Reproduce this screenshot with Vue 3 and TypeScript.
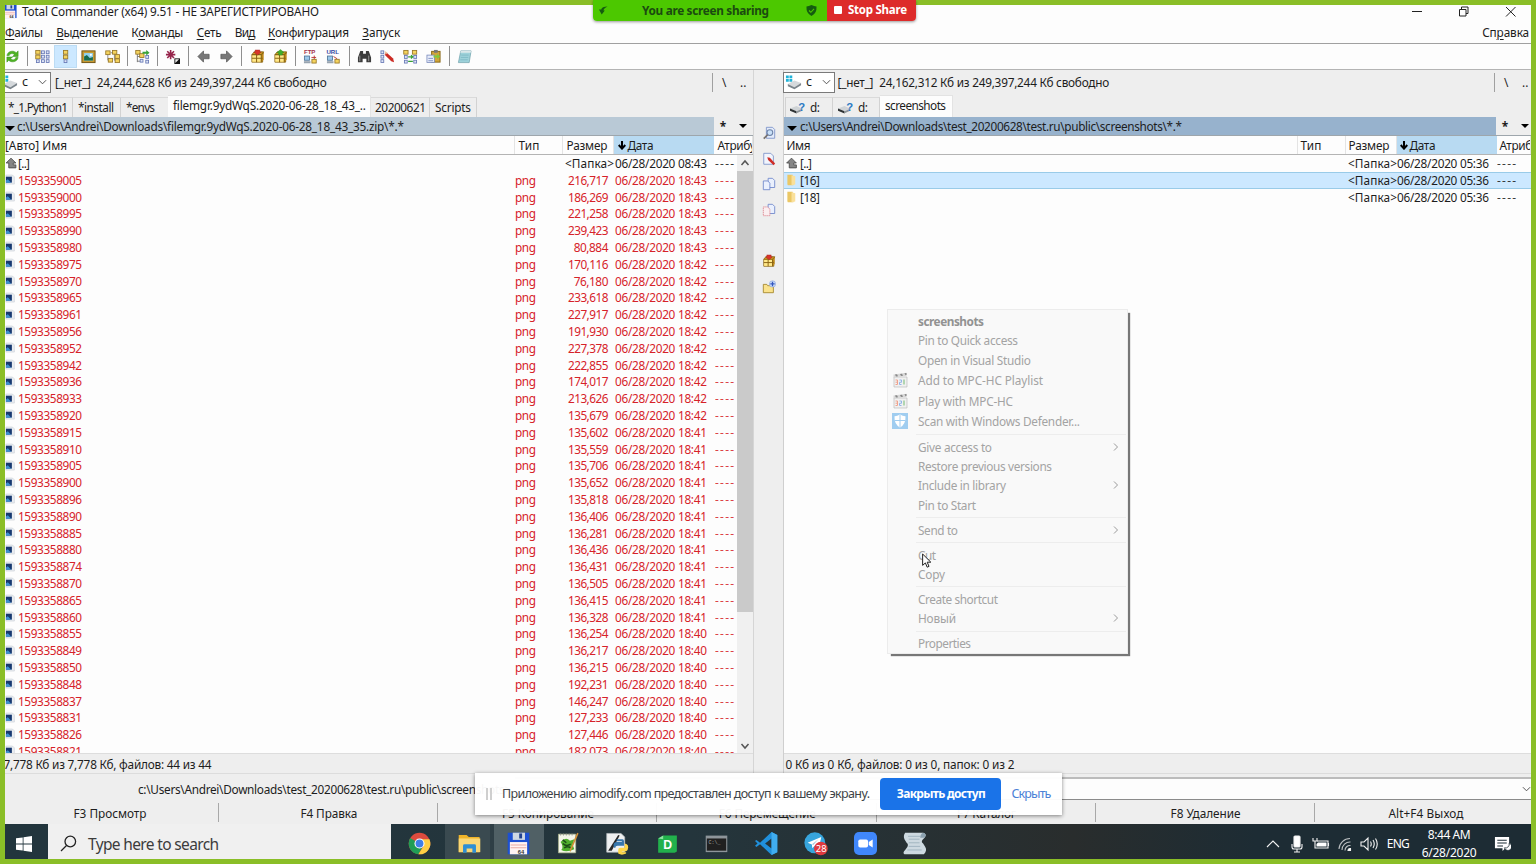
<script setup lang="ts">
import type { Directive } from 'vue'

interface Row {
  icon: string
  name: string
  ext: string
  size: string
  date: string
  dir: boolean
  selected?: boolean
}

interface MenuEntry {
  label: string
  w: number
  bold?: boolean
  icon?: string
  sub?: boolean
}

// Tracks the text so that a label occupies the given width in pixels.
const vFit: Directive<HTMLElement, number> = {
  mounted(el, binding) {
    const count = (el.textContent ?? '').length
    if (count < 2) return
    const natural = el.getBoundingClientRect().width
    el.style.letterSpacing = `${((binding.value - natural) / (count - 1)).toFixed(3)}px`
  },
}

const menus = [
  { a: '', u: 'Ф', b: 'айлы', w: 38 },
  { a: '', u: 'В', b: 'ыделение', w: 62 },
  { a: 'К', u: 'о', b: 'манды', w: 52 },
  { a: '', u: 'С', b: 'еть', w: 25 },
  { a: 'Ви', u: 'д', b: '', w: 20.500 },
  { a: '', u: 'К', b: 'онфигурация', w: 81 },
  { a: '', u: 'З', b: 'апуск', w: 38 },
]

const toolbar = [
  'refresh', '|', 'brief', 'full', 'thumbs', 'tree', '|', 'branch', '|', 'invert', '|',
  'back', 'forward', '|', 'pack', 'unpack', '|', 'ftp', 'url', '|',
  'find', 'rename', 'sync', 'copynames', '|', 'notepad',
]

const sideTools = ['view', 'edit', 'copy', 'move', '', 'pack', 'newfolder']

const raw: [string, string][] = [
  ['9005', '216,717'], ['9000', '186,269'], ['8995', '221,258'], ['8990', '239,423'],
  ['8980', '80,884'], ['8975', '170,116'], ['8970', '76,180'], ['8965', '233,618'],
  ['8961', '227,917'], ['8956', '191,930'], ['8952', '227,378'], ['8942', '222,855'],
  ['8936', '174,017'], ['8933', '213,626'], ['8920', '135,679'], ['8915', '135,602'],
  ['8910', '135,559'], ['8905', '135,706'], ['8900', '135,652'], ['8896', '135,818'],
  ['8890', '136,406'], ['8885', '136,281'], ['8880', '136,436'], ['8874', '136,431'],
  ['8870', '136,505'], ['8865', '136,415'], ['8860', '136,328'], ['8855', '136,254'],
  ['8849', '136,217'], ['8850', '136,215'], ['8848', '192,231'], ['8837', '146,247'],
  ['8831', '127,233'], ['8826', '127,446'], ['8821', '182,073'],
]

const minuteOf = (i: number): string => (i < 5 ? '43' : i < 15 ? '42' : i < 27 ? '41' : '40')

const folder = (icon: string, name: string, date: string, selected = false): Row => ({
  icon, name, ext: '', size: '<Папка>', date, dir: true, selected,
})

const leftRows: Row[] = [
  folder('up', '[..]', '06/28/2020 08:43'),
  ...raw.map(([id, size], i) => ({
    icon: 'image', name: '159335' + id, ext: 'png', size, date: `06/28/2020 18:${minuteOf(i)}`, dir: false,
  })),
]

const rightRows: Row[] = [
  folder('up', '[..]', '06/28/2020 05:36'),
  folder('folder', '[16]', '06/28/2020 05:36', true),
  folder('folder', '[18]', '06/28/2020 05:36'),
]

const panels = [
  {
    key: 'left', free: '24,244,628 Кб из 249,397,244 Кб свободно', path: 'c:\\Users\\Andrei\\Downloads\\filemgr.9ydWqS.2020-06-28_18_43_35.zip\\*.*',
    pathW: 387, first: '[Авто] Имя', firstW: 62, attr: 'Атрибуты', attrW: 52, rows: leftRows,
    status: '7,778 Кб из 7,778 Кб, файлов: 44 из 44', statusW: 208,
    tabs: [
      { t: '*_1.Python1', w: 60, c: 't1' }, { t: '*install', w: 36, c: 't2' }, { t: '*envs', w: 29, c: 't3' },
      { t: 'filemgr.9ydWqS.2020-06-28_18_43_..', w: 193, c: 't4 active' },
      { t: '20200621', w: 51, c: 't5' }, { t: 'Scripts', w: 36, c: 't6' },
    ],
  },
  {
    key: 'right', free: '24,162,312 Кб из 249,397,244 Кб свободно', path: 'c:\\Users\\Andrei\\Downloads\\test_20200628\\test.ru\\public\\screenshots\\*.*',
    pathW: 382, first: 'Имя', firstW: 24, attr: 'Атрибуты', attrW: 52, rows: rightRows,
    status: '0 Кб из 0 Кб, файлов: 0 из 0, папок: 0 из 2', statusW: 229,
    tabs: [
      { t: 'd:', w: 10, c: 'd1', icon: 'drive' }, { t: 'd:', w: 10, c: 'd2', icon: 'drive' },
      { t: 'screenshots', w: 61, c: 'd3 active' },
    ],
  },
]

const fkeys = [
  { t: 'F3 Просмотр', w: 73 }, { t: 'F4 Правка', w: 57 }, { t: 'F5 Копирование', w: 92 },
  { t: 'F6 Перемещение', w: 97 }, { t: 'F7 Каталог', w: 59 }, { t: 'F8 Удаление', w: 70 },
  { t: 'Alt+F4 Выход', w: 75 },
]

const groups: MenuEntry[][] = [
  [
    { label: 'screenshots', w: 66, bold: true },
    { label: 'Pin to Quick access', w: 100 },
    { label: 'Open in Visual Studio', w: 113 },
    { label: 'Add to MPC-HC Playlist', w: 125, icon: 'mpc' },
    { label: 'Play with MPC-HC', w: 95, icon: 'mpc' },
    { label: 'Scan with Windows Defender...', w: 162, icon: 'defender' },
  ],
  [
    { label: 'Give access to', w: 74, sub: true },
    { label: 'Restore previous versions', w: 134 },
    { label: 'Include in library', w: 88, sub: true },
    { label: 'Pin to Start', w: 58 },
  ],
  [{ label: 'Send to', w: 40, sub: true }],
  [{ label: 'Cut', w: 18 }, { label: 'Copy', w: 27 }],
  [{ label: 'Create shortcut', w: 80 }, { label: 'Новый', w: 38, sub: true }],
  [{ label: 'Properties', w: 53 }],
]

const apps = ['chrome', 'explorer', 'floppy', 'npp', 'python', 'dict', 'cmd', 'vscode', 'telegram', 'zoom', 'script']

const node = (x: number, y: number, c: string): string =>
  `<rect x="${x}" y="${y}" width="3" height="3" fill="#dfe5f6" stroke="${c}" stroke-width=".9"/>`
const dots = (x: number, c = '#6577b4'): string => node(x, 2, c) + node(x, 6.7, c) + node(x, 11.4, c)
const yfold = (x: number, y: number): string =>
  `<rect x="${x}" y="${y}" width="4.6" height="4" fill="#f4d35e" stroke="#967526" stroke-width=".9"/>`
const box = '<path d="M2 6l2.500-3h10l-1 3v8H2z" fill="#d9a520" stroke="#7b5a10" stroke-width=".8"/><path d="M2.400 6.400h9.300v7.200H2.400z" fill="#ffe88a"/><path d="M14.500 3.500v8L12 14V6.200z" fill="#c08a17"/><path d="M2 9.800h11.500M7 6v8M2 6h10l2.300-2.500M12 6v8" stroke="#8a6514" stroke-width="1.100" fill="none"/>'

const icons: Record<string, string> = {
  refresh: '<path d="M2 7c1-5 7-6 10-3l2-2v6H8l2-2C8 4 5 5 4.500 7zM14 9c-1 5-7 6-10 3l-2 2V8.500h6l-2 2c2 2 5 1 5.500-1.500z" fill="#4fb324" stroke="#2d8a12" stroke-width=".5"/>',
  brief: yfold(.8, 1.500) + yfold(.8, 6.500) + node(1.500, 11.500, '#6577b4') + dots(7) + dots(12),
  full: yfold(5.800, 1.500) + yfold(5.800, 6.500) + node(6.500, 11.500, '#6577b4'),
  thumbs: '<rect x="1" y="2" width="14" height="12.500" fill="#c79a33" stroke="#6f5110"/><rect x="3.300" y="4.300" width="9.400" height="8" fill="#8fd0ee"/><path d="M3.300 12.300V8l3-1.500 3 3 3.400-1v3.800z" fill="#176a4d"/><circle cx="10.500" cy="6.200" r="1.200" fill="#fff"/>',
  tree: '<path d="M3 4v8h2M10 3v9h2M6 4h5" stroke="#8b8b8b" fill="none"/>' + yfold(.8, 2) + yfold(3.500, 10) + yfold(8, 1.500) + yfold(10.800, 10.500) + yfold(10.800, 6),
  branch: '<path d="M2.500 3v11M2.500 8h3M2.500 13h3" stroke="#777" fill="none"/>' + yfold(.8, 1.500) + yfold(5, 5) + node(5.500, 11, '#6577b4') + node(11.500, 7, '#6577b4') + node(11.500, 12, '#6577b4') + '<path d="M8 3h4V1l3.500 3-3.500 3V5H8z" fill="#3aa33a"/>',
  invert: '<path d="M6 1v10M1 6h10M2.400 2.400l7.200 7.200M9.600 2.400L2.400 9.600" stroke="#96234a" stroke-width="1.700"/><path d="M10 10h6v6h-6z" fill="#111"/><path d="M11 11h4l-4 4z" fill="#eee"/>',
  back: '<path d="M2 8l6-6v3.600h6v4.800H8V14z" fill="#787878" stroke="#505050" stroke-width=".7"/>',
  forward: '<path d="M14 8L8 2v3.600H2v4.800h6V14z" fill="#787878" stroke="#505050" stroke-width=".7"/>',
  pack: box + '<path d="M5.500 1h5v2.300h1.500L8 6.500 4 3.300h1.500z" fill="#d8352c" stroke="#9d1c18" stroke-width=".4"/>',
  unpack: box + '<path d="M8 .5l4 3.500h-2v2.500H6V4H4z" fill="#3fae2e" stroke="#277e1c" stroke-width=".4"/>',
  ftp: '<text x="1" y="5.800" font-size="6.500" font-weight="700" font-family="Liberation Sans" fill="#a33249">FTP</text><rect x="1.500" y="7.500" width="5.500" height="4.500" fill="#9cc8ea" stroke="#4f7497" stroke-width=".9"/><rect x="1" y="13" width="7" height="2.200" fill="#98a4b0"/><path d="M9 9h5M12 7v4" stroke="#b33" />' + yfold(9.500, 11),
  url: '<text x=".5" y="5.800" font-size="6.500" font-weight="700" font-family="Liberation Sans" fill="#3448a0">URL</text><rect x="1.500" y="7.500" width="5.500" height="4.500" fill="#9cc8ea" stroke="#4f7497" stroke-width=".9"/><rect x="1" y="13" width="7" height="2.200" fill="#98a4b0"/><path d="M8 8l4 2.500" stroke="#b33" />' + yfold(9.500, 11),
  find: '<path d="M3.500 2h3v3h3V2h3L15 9v5h-5v-3.500H6V14H1V9z" fill="#3c3c3c"/><path d="M3 7v6M12.500 7v6" stroke="#999"/>',
  rename: dots(1) + '<path d="M6 3l8 7 1 4-3-1-7-7z" fill="#cc2b24"/><path d="M5 2l3 2-2 2z" fill="#efc9a3"/>',
  sync: yfold(.8, 1.500) + yfold(10, 1.500) + node(1.500, 7, '#6577b4') + node(1.500, 12, '#6577b4') + node(11.500, 7, '#6577b4') + node(11.500, 12, '#6577b4') + '<path d="M5.500 8.300h5M8.500 6.500l2 1.800-2 1.800M10.500 13.300h-5" stroke="#35a035" fill="none" stroke-width="1.300"/>',
  copynames: '<rect x="6" y="2.500" width="9" height="11.500" fill="#d1a53a" stroke="#856516"/><rect x="8.500" y="1" width="4" height="3" fill="#777"/><rect x="1" y="6.500" width="8" height="8" fill="#e8edfa" stroke="#7284b8" stroke-width=".8"/><path d="M2.500 10h5M2.500 12.500h5" stroke="#8092c4"/><path d="M8 7h4v-2l3 3-3 3V9H8z" fill="#7ecb3c"/>',
  notepad: '<path d="M4 2h11l-2 12.500H1.500z" fill="#9ed2da" stroke="#669ba6" stroke-width=".7"/><path d="M4 2h11l-.4 2H3.500z" fill="#dce8ea"/><path d="M4.500 6.500h8M4 9h8M3.500 11.500h8" stroke="#79b6c1" stroke-width=".8"/>',
  view: '<path d="M5 1.500h7l2.500 2.500v10H5z" fill="#e3ebfa" stroke="#7e93c9"/><circle cx="9" cy="7.500" r="3.300" fill="#c9e0f8" stroke="#6d83a8" stroke-width="1.200"/><path d="M6.500 10L2 14.500" stroke="#77716c" stroke-width="2"/>',
  edit: '<path d="M2 1.500h8l3 3v9.500H2z" fill="#f2f5fd" stroke="#7e93c9"/><path d="M6 6l3 .7 6 6.300-1.700 2-6.300-6z" fill="#cf2d27"/>',
  copy: '<path d="M7 1.500h5l2.500 2.500v8H7z" fill="#eaf0fd" stroke="#7088cb"/><path d="M1.500 4.500h5L9 7v7.500H1.500z" fill="#eaf0fd" stroke="#7088cb"/>',
  move: '<path d="M7 1.500h5l2.500 2.500v8H7z" fill="#eaf0fd" stroke="#7088cb"/><path d="M1.500 4.500h5L9 7v7.500H1.500z" fill="#fbeef0" stroke="#dd8790" stroke-dasharray="1.500 .7"/>',
  newfolder: '<path d="M1.500 5h4l1 1.500H13v8H1.500z" fill="#fae28c" stroke="#a3862c"/><circle cx="12" cy="4.500" r="3.600" fill="#cfe0fb" stroke="#7b97d8" stroke-width=".6"/><path d="M12 2v5M9.500 4.500h5" stroke="#3356bd" stroke-width="1.500"/>',
  up: '<path d="M8 1.500L14.500 8H11v2.500h3.500v4H5V8H1.500z" fill="#858585" stroke="#484848" stroke-width="1.100"/>',
  image: '<path d="M1.500 .8h10.500l3 3v11.500H1.500z" fill="#e9edf1" stroke="#b9c2ca" stroke-width=".7"/><path d="M1.500 3.500H11v9.500H1.500z" fill="#17386f"/><path d="M1.500 13V9.500l3-2L10 13z" fill="#3d8fd1"/>',
  folder: '<path d="M2.500 1h7l1 12v2H3l-.5-1.500z" fill="#ebc765"/><path d="M8 1.500l5 1.500v11L8 15z" fill="#fae09a"/>',
  disk: '<path d="M1 1.500h3v3H1zM4.700 1.500h3v3h-3zM1 5.200h3v3H1zM4.700 5.200h3v3h-3z" fill="#1fb2d8"/><path d="M3 10.500l7-3.500 7 2.500-7 4.500z" fill="#d5d9dc"/><path d="M3 10.500l7 3.500v2.200l-7-3.200zM10 14l7-4.500v2.300l-7 4.400z" fill="#7b858c"/>',
  drive: '<path d="M0 10l7-2.500 6 3-6 2.500z" fill="#cfd3d6"/><path d="M0 10l7 3v2.400l-7-3z" fill="#2e3234"/><path d="M7 13l6-2.500v2L7 15.200z" fill="#8d9499"/><text x="8.800" y="12.500" font-size="12" font-weight="700" font-family="Liberation Sans" fill="#2b79c4">?</text>',
  floppy: '<path d="M1 1h30v30H1z" fill="#1d50d2"/><path d="M8 1h17v10H8z" fill="#cfd8e4"/><path d="M17 2h4v7h-4z" fill="#20418e"/><path d="M4 14h24v17H4z" fill="#fff3f2"/><path d="M5 18h22M5 22h22" stroke="#e9aaa4" stroke-width="1.500"/><text x="15" y="30" font-size="8" font-weight="700" font-family="Liberation Sans" fill="#333">64</text>',
  chrome: '<circle cx="16" cy="16" r="15" fill="#dd4b3e"/><path d="M16 16L3 8.500A15 15 0 0 0 14.500 31l6-10.500z" fill="#209d56"/><path d="M14.500 31A15 15 0 0 0 29.800 10H16l6 9z" fill="#fdce44"/><circle cx="16" cy="16" r="7" fill="#fff"/><circle cx="16" cy="16" r="5.500" fill="#3f7fe8"/>',
  explorer: '<path d="M1 4h11l3 3h15v21H1z" fill="#f0b429"/><path d="M1 9h30v19H1z" fill="#fbd775"/><path d="M7 29V19q0-2 2-2h14q2 0 2 2v10h-5v-6h-8v6z" fill="#2f8fd4"/>',
  npp: '<path d="M2 3h24v26H2z" fill="#f4f6e9" stroke="#aab28b"/><path d="M5 2v3M9 2v3M13 2v3M17 2v3M21 2v3" stroke="#888"/><path d="M5 14q7-8 13-2l6-2-2 8 2 6q-11 5-18 1 4-4-1-11z" fill="#4fae2c"/><path d="M8 16q5 5 11 1M10 22q5-3 9 0M8 11l5 4" stroke="#1b4b16" fill="none" stroke-width="2"/><path d="M30 2L20 25l-2 3V24L28 1z" fill="#d3913a"/>',
  python: '<path d="M1 2h20l5 5v21H1z" fill="#eef0f1" stroke="#b6bcc0"/><path d="M3 26L17 4l2 1L8 26z" fill="#272727"/><path d="M15 10h8q2 0 2 3v6h-9q-3 0-3 3h-2q-2-7 3-8h8v-1h-7z" fill="#3776ab"/><path d="M26 16q7 1 4 9-1 2-4 2h-4v1h6v2q-6 3-11 0v-5q0-3 3-3h6z" fill="#ffd648"/>',
  dict: '<path d="M3 9l7-4h19v22l-3 2H3z" fill="#22b14c"/><path d="M3 9l7-4v5z" fill="#8be3a0"/><text x="10" y="24" font-size="17" font-weight="700" font-family="Liberation Sans" fill="#fff">D</text>',
  cmd: '<path d="M1 5h30v23H1z" fill="#8e959a"/><path d="M2.500 9h27v17h-27z" fill="#202020"/><text x="5" y="16" font-size="7" font-family="Liberation Mono" fill="#aaa">C:\\_</text>',
  vscode: '<path d="M23 0l8 4v24l-8 4L7 17 2 21l-2-2 3.500-3L0 12.500 2 11l5 4zM23 9l-9 7 9 7z" fill="#2090dc" fill-rule="evenodd"/><path d="M23 0l8 4v24l-8 4z" fill="#40adf0"/>',
  telegram: '<circle cx="15" cy="15" r="14.500" fill="#37a5dd"/><path d="M5 15L24 7l-3.500 17-6-4.500-3 3-.5-5z" fill="#fff"/><path d="M11 17l9-7-7 8z" fill="#a9c9dd"/><circle cx="23.500" cy="23" r="9.500" fill="#e0393e"/><text x="16.500" y="28" font-size="13" font-family="Noto Sans" fill="#fff">28</text>',
  zoom: '<rect x="0" y="0" width="32" height="32" rx="7" fill="#4087fc"/><rect x="6" y="10.500" width="13.500" height="11" rx="2.500" fill="#fff"/><path d="M20.500 14l5.500-3.500v11L20.500 18z" fill="#fff"/>',
  script: '<path d="M3 1h25q6 2 2 7l-3 3q-2 3 1 5l3 5q3 5-2 10H2q-3-2 1-6l3-4q2-4-1-6L2 10q-2-5 1-9z" fill="#cdd9e0"/><path d="M7 6h17M8 10h15M8 15h15M8 20h16M6 25h20" stroke="#9fb3bf" stroke-width="1.300"/><path d="M28 1q6 2 2 7h-6q0-5 4-7z" fill="#8ba1af"/>',
  mpc: '<path d="M2 5h13v10H2z" fill="#f1f1f1" stroke="#bbb" stroke-width=".7"/><path d="M1.500 2.500L14.500.8v3L1.500 5.500z" fill="#d8d8d8"/><path d="M3 2.500l2-.3 1 2-2 .3zM8 2l2-.3 1 2-2 .3zM12.500 1.200l2-.2v2l-1 .2z" fill="#888"/><path d="M3.500 8h2v4.500h-2m0-2.300h2" stroke="#f0a28d" fill="none"/><path d="M7.500 8h2v2.300h-2v2.200h2" stroke="#92b4e8" fill="none"/><path d="M12 7.500v5" stroke="#87c487" stroke-width="1.200"/>',
  defender: '<path d="M0 0h16v16H0z" fill="#a0cdf0"/><path d="M8 1.500q3 1.800 5.500 1.700Q14 11 8 14.500 2 11 2.500 3.200 5 3.300 8 1.500z" fill="#fff"/><path d="M8 2v12M2.500 7.500h11" stroke="#a0cdf0"/>',
}
</script>

<template>
  <div class="screen">
    <div class="window">
      <header class="title">
        <svg class="i16" viewBox="0 0 32 32" v-html="icons.floppy" />
        <span v-fit="297">Total Commander (x64) 9.51 - НЕ ЗАРЕГИСТРИРОВАНО</span>
        <svg class="winbtns" viewBox="0 0 110 14" fill="none" stroke="#222">
          <path d="M1 7.500h10" /><path d="M48.500 5.500h6.500v6.500h-6.500zM50.500 5.500v-2.500h6.500v6.500h-2" /><path d="M95 3l9.500 9.500M104.500 3L95 12.500" />
        </svg>
      </header>
      <nav class="menubar">
        <span v-for="m in menus" :key="m.u + m.b" v-fit="m.w">{{ m.a }}<u>{{ m.u }}</u>{{ m.b }}</span>
        <span v-fit="47" class="help">Сп<u>р</u>авка</span>
      </nav>
      <div class="toolbar">
        <template v-for="(t, i) in toolbar" :key="i">
          <i v-if="t === '|'" class="tsep" />
          <b v-else class="tbtn" :class="{ on: t === 'full' }"><svg class="i16" viewBox="0 0 16 16" v-html="icons[t]" /></b>
        </template>
      </div>

      <main class="work">
        <section v-for="p in panels" :key="p.key" class="panel" :class="p.key">
          <div class="drive">
            <div class="combo">
              <svg class="i17" viewBox="0 0 18 18" v-html="icons.disk" /><span>c</span>
              <svg class="chev" viewBox="0 0 10 6"><path d="M1 1l4 4 4-4" fill="none" stroke="#444" /></svg>
            </div>
            <span v-fit="36" class="label">[_нет_]</span>
            <span v-fit="230" class="free">{{ p.free }}</span>
            <div class="nav"><span>\</span><span>..</span></div>
          </div>
          <div class="tabs">
            <div v-for="t in p.tabs" :key="t.c" class="tab" :class="t.c">
              <svg v-if="'icon' in t" class="i16" viewBox="0 0 16 16" v-html="icons.drive" />
              <span v-fit="t.w">{{ t.t }}</span>
            </div>
          </div>
          <div class="path">
            <div class="crumb"><i class="tri" /><span v-fit="p.pathW">{{ p.path }}</span></div>
            <span class="star">*</span><i class="tri small" />
          </div>
          <div class="head cols">
            <div><span v-fit="p.firstW">{{ p.first }}</span></div>
            <div><span v-fit="21">Тип</span></div>
            <div><span v-fit="41">Размер</span></div>
            <div class="sorted">
              <svg class="arrow" viewBox="0 0 9 10"><path d="M4.500 0v8M.8 4.500l3.700 4 3.700-4" fill="none" stroke="#000" stroke-width="2.300" /></svg>
              <span v-fit="26">Дата</span>
            </div>
            <div><span v-fit="p.attrW">{{ p.attr }}</span></div>
          </div>
          <div class="body">
            <div class="list">
              <div v-for="r in p.rows" :key="r.name" class="row cols" :class="{ file: !r.dir, sel: r.selected }">
                <div class="name"><svg viewBox="0 0 16 16" v-html="icons[r.icon]" /><span v-fit="r.dir ? (r.name === '[..]' ? 12 : 20) : 64">{{ r.name }}</span></div>
                <div><span v-if="r.ext" v-fit="21">{{ r.ext }}</span></div>
                <div class="size"><span v-fit="r.dir ? 49 : r.size.length * 5.8">{{ r.size }}</span></div>
                <div class="date"><span v-fit="92">{{ r.date }}</span></div>
                <div><span v-fit="19">----</span></div>
              </div>
            </div>
            <div v-if="p.key === 'left'" class="scroll">
              <svg viewBox="0 0 16 16"><path d="M4.500 10L8 6l3.500 4" /></svg>
              <div class="thumb" />
              <svg class="down" viewBox="0 0 16 16"><path d="M4.500 6L8 10l3.500-4" /></svg>
            </div>
          </div>
          <div class="status"><span v-fit="p.statusW">{{ p.status }}</span></div>
        </section>
        <aside class="side">
          <b v-for="(s, i) in sideTools" :key="i"><svg v-if="s" viewBox="0 0 16 16" v-html="icons[s]" /></b>
        </aside>
      </main>

      <div class="command">
        <span v-fit="373">c:\Users\Andrei\Downloads\test_20200628\test.ru\public\screenshots&gt;</span>
        <div class="input"><svg class="chev" viewBox="0 0 10 6"><path d="M1 1l4 4 4-4" fill="none" stroke="#444" /></svg></div>
      </div>
      <div class="fkeys"><div v-for="f in fkeys" :key="f.t"><span v-fit="f.w">{{ f.t }}</span></div></div>

      <footer class="taskbar">
        <div class="start"><svg viewBox="0 0 16 16"><path d="M0 2.300l6.700-.9v6.100H0zM7.500 1.300L16 0v7.500H7.500zM0 8.400h6.700v6.200L0 13.700zM7.500 8.400H16V16l-8.500-1.300z" fill="#fff" /></svg></div>
        <div class="search">
          <svg viewBox="0 0 17 17" fill="none" stroke="#222" stroke-width="1.300"><circle cx="10.300" cy="6.500" r="5.300" /><path d="M6.500 10.500L1 16" /></svg>
          <span v-fit="131">Type here to search</span>
        </div>
        <div class="apps"><div v-for="a in apps" :key="a" :class="a"><svg viewBox="0 0 32 32" v-html="icons[a]" /></div></div>
        <div class="tray">
          <svg class="s18" viewBox="0 0 18 18"><path d="M3 12l6-6 6 6" /></svg>
          <svg class="s18" viewBox="0 0 18 18"><rect x="6" y="1" width="6" height="11" rx="1" fill="#fff" /><path d="M4 9v3q0 2 2 2h6q2 0 2-2V9M9 14v3M6 17h6" /></svg>
          <svg class="s18" viewBox="0 0 18 18"><path d="M5 6h11v7H3V9" /><path d="M6 7.500h8.500v4H4.500V9" fill="#fff" stroke="none" /><path d="M1 3v3h4V3M3 6v3M16.500 8v3" /></svg>
          <svg class="s18" viewBox="0 0 18 18"><g opacity=".75"><path d="M3 14A11 11 0 0 1 14 3.500M6 15a8 8 0 0 1 8.500-8M9 15.500a5 5 0 0 1 5.500-5" /></g><path d="M12 15.500a2 2 0 0 1 2.500-2v2z" fill="#fff" /></svg>
          <svg class="s18" viewBox="0 0 18 18"><path d="M1 7h3l4-4v12l-4-4H1zM10.500 6.500q1.500 2.500 0 5M13 5q2.500 4 0 8M15.500 3.500q3.500 5.500 0 11" /></svg>
          <span v-fit="23" class="lang">ENG</span>
          <div class="clock"><span v-fit="43">8:44 AM</span><span v-fit="55">6/28/2020</span></div>
          <svg class="note" viewBox="0 0 18 18"><path d="M1 1h15v12h-4l-3 3v-3H1z" fill="#fff" stroke="none" /><path d="M3.500 4.500h10M3.500 7.500h10M3.500 10.500h6" stroke="#1c2c34" /><path d="M11 12.500a4 4 0 0 0 5-5 4 4 0 1 1-5 5z" fill="#fff" stroke="#1c2c34" stroke-width=".8" /></svg>
        </div>
      </footer>
    </div>

    <div class="share">
      <div class="green">
        <svg class="leaf" viewBox="0 0 10 10"><path d="M9.500.5Q3 .5 2.500 4H0l3 5.500L6.500 5H5Q5 2.500 9.500.5z" fill="#155c10" /></svg>
        <span v-fit="127">You are screen sharing</span>
        <svg class="shield" viewBox="0 0 12 12"><path d="M6 0q3 1.600 5.500 1.600Q12 9 6 12 0 9 .5 1.600 3 1.600 6 0z" fill="#155c10" /><path d="M3.300 6l2 2 3.500-3.700" fill="none" stroke="#4cc800" stroke-width="1.200" /></svg>
      </div>
      <div class="red"><i /><span v-fit="59">Stop Share</span></div>
    </div>

    <div class="ctx">
      <div v-for="(g, gi) in groups" :key="gi" class="group">
        <div v-for="e in g" :key="e.label" class="entry" :class="{ bold: e.bold, tall: e.icon }">
          <div class="slot"><svg v-if="e.icon" viewBox="0 0 16 16" v-html="icons[e.icon]" /></div>
          <span v-fit="e.w">{{ e.label }}</span>
          <svg v-if="e.sub" class="sub" viewBox="0 0 6 8"><path d="M1 .5L4.500 4 1 7.500" fill="none" stroke="#999" /></svg>
        </div>
      </div>
    </div>
    <svg class="cursor" viewBox="0 0 11 17"><path d="M.7.8v12.500l3-2.700 2 4.700 2-.9-2-4.600h4z" fill="#fff" stroke="#222" stroke-width="1.100" /></svg>

    <div class="notice">
      <i class="grip" />
      <span v-fit="368" class="msg">Приложению aimodify.com предоставлен доступ к вашему экрану.</span>
      <button><span v-fit="89">Закрыть доступ</span></button>
      <a><span v-fit="40">Скрыть</span></a>
    </div>
  </div>
</template>

<style>
body { margin: 0; overflow: hidden; }
</style>

<style scoped>
* { box-sizing: border-box; }
.screen {
  position: relative; width: 1536px; height: 864px; padding: 5px; overflow: hidden;
  background: #8abe27; color: #1d1d1d;
  font: 11.8px/16px 'Noto Sans', 'Open Sans', sans-serif;
}
.window { display: flex; flex-direction: column; width: 1526px; height: 854px; background: #fdfdfd; overflow: hidden; }
span { white-space: nowrap; flex: none; display: inline-block; }
svg { display: block; flex: none; }
.i16 { width: 15px; height: 15px; }
.i17 { width: 17px; height: 17px; }
u { text-decoration: underline; text-underline-offset: 1.5px; text-decoration-thickness: 1px; }

.title { display: flex; align-items: center; height: 16px; flex: none; }
.title .i16 { margin: -4px 5px 0 -2px; width: 14px; }
.title span { margin-top: -4px; }
.winbtns { width: 110px; height: 14px; margin: -4px 10.500px 0 auto; }
.menubar { display: flex; align-items: center; gap: 13.500px; height: 23px; flex: none; border-bottom: 1px solid #a0a0a0; }
.menubar .help { margin-left: auto; margin-right: 2px; }
.toolbar { display: flex; align-items: center; height: 25px; flex: none; margin-left: -4.5px; padding-bottom: 1px; }
.tbtn { width: 23.200px; height: 23px; flex: none; display: flex; align-items: center; justify-content: center; }
.tbtn.on { background: #cce8ff; border: 1px solid #bcdcf4; }
.tsep { width: 1px; height: 20px; flex: none; background: #8f8f8f; margin: 0 3.125px; }

.work { display: grid; grid-template-columns: 749px 29px 748px; grid-template-rows: minmax(0, 1fr); height: 705px; flex: none; border-top: 1px solid #b4b4b4; background: #eee; }
.panel { display: flex; flex-direction: column; min-width: 0; min-height: 0; grid-row: 1; }
.panel.left { grid-column: 1; border-right: 1px solid #d5d5d5; }
.panel.right { grid-column: 3; border-left: 1px solid #cfcfcf; }
.side { grid-column: 2; grid-row: 1; padding-top: 50.500px; display: flex; flex-direction: column; align-items: center; }
.side b { height: 25.600px; display: flex; align-items: center; }
.side svg { width: 14px; height: 14px; }

.drive { display: flex; align-items: center; height: 24px; flex: none; }
.drive > span, .nav span { margin-top: -1px; }
.combo { display: flex; align-items: center; height: 21px; background: #fff; border: 1px solid #7a7a7a; flex: none; }
.left .combo { width: 46px; border-left: 0; }
.right .combo { width: 52px; margin-left: -1px; }
.left .combo .i17 { margin-left: -4px; }
.right .combo .i17 { margin-left: 1px; }
.combo span { margin-left: 4px; font-size: 12.500px; }
.chev { width: 9px; height: 6px; margin-left: auto; margin-right: 3px; }
.label { margin-left: 4px; }
.right .label { margin-left: 2.500px; }
.free { margin-left: 6px; }
.nav { margin-left: auto; display: flex; width: 41px; height: 19px; border-left: 1px solid #a0a0a0; align-items: center; }
.nav span:first-child { width: 20px; padding-left: 9px; }
.nav span:last-child { padding-left: 7px; }
.right .nav { width: 37px; }

.tabs { display: flex; align-items: flex-end; height: 23px; flex: none; }
.tab { display: flex; align-items: center; height: 20px; flex: none; border-top: 1px solid #dadada; border-right: 1px solid #d2d2d2; padding-bottom: 2px; }
.tab.active { height: 22px; background: #fdfdfd; border-color: #e3e3e3; padding-bottom: 3px; }
.t1 { width: 68px; padding-left: 3px; } .t2 { width: 48px; padding-left: 5px; } .t3 { width: 47px; padding-left: 5px; border-right: 0; }
.t4 { width: 203px; padding-left: 5px; } .t5 { width: 59px; padding-left: 4px; } .t6 { width: 47px; padding-left: 5px; }
.d1 { width: 48px; margin-left: 1px; border-left: 1px solid #d2d2d2; padding-left: 4px; } .d2 { width: 47px; padding-left: 5px; } .d3 { width: 73px; padding-left: 5px; }
.tab .i16 { margin-right: 5px; }

.path { display: flex; align-items: center; height: 19px; flex: none; border-bottom: 1px solid #9ea6ac; }
.crumb { display: flex; align-items: center; height: 18px; background: #b9c9d6; }
.left .crumb { width: 709px; } .right .crumb { width: 712px; background: #97b2cd; padding-left: 3px; }
.tri { border: 5px solid transparent; border-top-color: #000; border-bottom: 0; margin-top: 4px; }
.crumb span { margin-left: 2px; }
.right .crumb span { margin-left: 3px; }
.tri.small { border-width: 4px; border-bottom: 0; margin: 0 0 0 12px; }
.star { width: 8px; margin-left: 5px; line-height: 12px; font-size: 12px; padding-top: 2px; font-weight: 700; text-align: center; }

.cols { display: grid; }
.left .cols { grid-template-columns: 510px 48px 51px 100px 39px; }
.right .cols { grid-template-columns: 514px 48px 51px 100px 34px; }
.head { height: 19px; flex: none; background: #fdfdfd; border-bottom: 1px solid #b4b4b4; }
.head > div { display: flex; align-items: center; overflow: hidden; border-right: 1px solid #e4e4e4; padding-left: 2.500px; }
.left .head > div { padding-left: 3.500px; }
.left .head > div:first-child { padding-left: 0; }
.head > div:nth-child(4) { border-right: 0; }
.head .sorted { background: #b8daf2; }
.arrow { width: 8px; height: 9px; margin-right: 2px; }

.body { flex: 1; min-height: 0; background: #fdfdfd; display: grid; grid-template-columns: minmax(0, 1fr); overflow: hidden; border-bottom: 1px solid #ddd; }
.list, .scroll { grid-row: 1; grid-column: 1; min-height: 0; }
.row { height: 16.8px; align-items: center; line-height: 16.8px; }
.row > div { display: flex; min-width: 0; }
.row.file { color: #d62229; }
.row.sel { background: #cce8ff; box-shadow: inset 0 1px #99cbe8, inset 0 -1px #99cbe8; }
.name { align-items: center; }
.name svg { width: 12px; height: 12px; margin-right: 1px; }
.right .name svg { margin: 0 2.500px 0 .5px; width: 13px; }
.file .name svg { width: 10px; height: 11px; margin: -1px 3px 0 0; }
.left .row > div:nth-child(5) { padding-left: 1px; }
.left .date { padding-left: 1px; }
.size { justify-content: flex-end; }
.file .size { padding-right: 6px; }
.row > div:nth-child(5) span { opacity: .85; }
.scroll { justify-self: end; width: 16px; height: 599px; background: #f0f0f0; display: flex; flex-direction: column; z-index: 1; }
.scroll svg { width: 16px; height: 16px; fill: none; stroke: #555; stroke-width: 1.500; }
.thumb { height: 441px; background: #cacaca; }
.down { margin-top: auto; }
.status { height: 20px; flex: none; display: flex; align-items: center; border-bottom: 1px solid #dcdcdc; overflow: hidden; }
.left .status span { margin-left: -1.500px; } .right .status span { margin-left: 1.500px; }

.command { height: 27px; flex: none; display: flex; align-items: center; background: #eee; padding: 3px 0 1px 133px; }
.input { height: 23px; margin-left: 4px; flex: 1; background: #fdfdfd; border-top: 2px solid #bcbcbc; border-bottom: 1px solid #8b8b8b; display: flex; align-items: center; }
.input .chev { margin-right: 0; }
.fkeys { height: 23px; flex: none; background: #eee; display: grid; grid-template-columns: 214px repeat(5, 219.200px) 1fr; align-items: center; }
.fkeys div { height: 19px; border-right: 1px solid #a8a8a8; display: flex; justify-content: center; align-items: center; padding-left: 1.500px; }
.fkeys div:first-child { padding: 0 3px 0 0; }
.fkeys div:last-child { border: 0; padding-left: 6px; }

.taskbar { height: 35px; flex: none; display: flex; background: linear-gradient(90deg, #22353d, #24353c 45%, #292d2d 70%, #1d2c34 82%); }
.start { width: 43px; padding: 12px 0 0 11px; flex: none; }
.start svg { width: 16px; height: 16px; }
.search { width: 343px; flex: none; background: #f0f0f0; display: flex; align-items: center; padding: 5px 0 0 12px; font-size: 15.500px; color: #3c3c3c; line-height: 20px; }
.search svg { width: 17px; height: 17px; margin: -2px 11px 0 0; }
.apps { display: flex; flex: none; margin-left: 4px; }
.apps > div { width: 49.500px; display: flex; align-items: center; justify-content: center; padding-top: 4px; }
.apps svg { width: 23px; height: 23px; overflow: visible; }
.apps .explorer { background: #3a4a50; box-shadow: inset -4px 0 #2f3f46; }
.apps .floppy { background: #506065; }
.tray { display: flex; align-items: center; margin-left: auto; color: #fff; padding-top: 5px; font-size: 12px; }
.s18 { width: 18px; height: 18px; margin-right: 6px; }
.tray svg { fill: none; stroke: #f2f2f2; stroke-width: 1.100; }
.lang { margin-left: 3px; }
.clock { margin-left: 5px; width: 70px; margin-right: 10px; display: flex; flex-direction: column; align-items: center; line-height: 18px; }
.note { width: 17px; height: 17px; margin-right: 20px; }

.share { position: absolute; left: 593px; top: 0; display: flex; height: 21px; border-radius: 0 0 4px 4px; overflow: hidden; font-weight: 700; box-shadow: 0 1px 3px #0006; }
.green { width: 234px; background: #4cc800; color: #1b4b10; display: flex; align-items: center; }
.green span { margin-left: 39px; margin-top: -1px; }
.leaf { width: 9px; height: 9px; margin-left: 6px; margin-right: -5px; }
.shield { width: 11px; height: 11px; margin-left: 37px; }
.red { width: 89px; background: #dd2b2a; color: #fff; display: flex; align-items: center; padding-bottom: 2px; font-size: 11.500px; }
.red i { width: 8px; height: 8px; background: #fff; margin: 0 6px 0 7px; border-radius: 1px; }

.ctx { position: absolute; left: 887px; top: 309px; width: 241px; height: 345px; background: #f9f9f9; border: 1px solid #ececec; padding-top: 1.500px; box-shadow: 3px 3px 1px -1px #777; color: #a3a3a3; }
.group + .group { margin-top: 2.800px; padding-top: 2.800px; position: relative; }
.group + .group::before { content: ''; position: absolute; top: 0; left: 28px; right: 1px; height: 1px; background: #ededed; }
.entry { display: flex; align-items: center; height: 19.330px; }
.entry.tall { height: 20.700px; }
.entry.bold { font-weight: 700; color: #929292; }
.slot { width: 30px; padding-left: 4px; flex: none; }
.slot svg { width: 16px; height: 16px; }
.sub { width: 6px; height: 8px; margin-left: auto; margin-right: 8px; }
.cursor { position: absolute; left: 922px; top: 553px; width: 10px; height: 16px; }

.notice { position: absolute; left: 475px; top: 773px; width: 587px; height: 42px; background: #fffffff5; box-shadow: 0 1px 4px #0007; display: flex; align-items: center; color: #3e4347; font-size: 12.500px; }
.grip { width: 6px; height: 12px; border: solid #cfcfcf; border-width: 0 2px; margin-left: 11px; }
.msg { margin-left: 10px; }
.notice button { margin: 0 0 0 11px; width: 121px; height: 32px; border: 0; border-radius: 4px; background: #1a73e8; color: #fff; font: 700 12px/16px 'Noto Sans', sans-serif; padding: 0; }
.notice a { color: #4a80d6; margin-left: 10px; }
</style>
